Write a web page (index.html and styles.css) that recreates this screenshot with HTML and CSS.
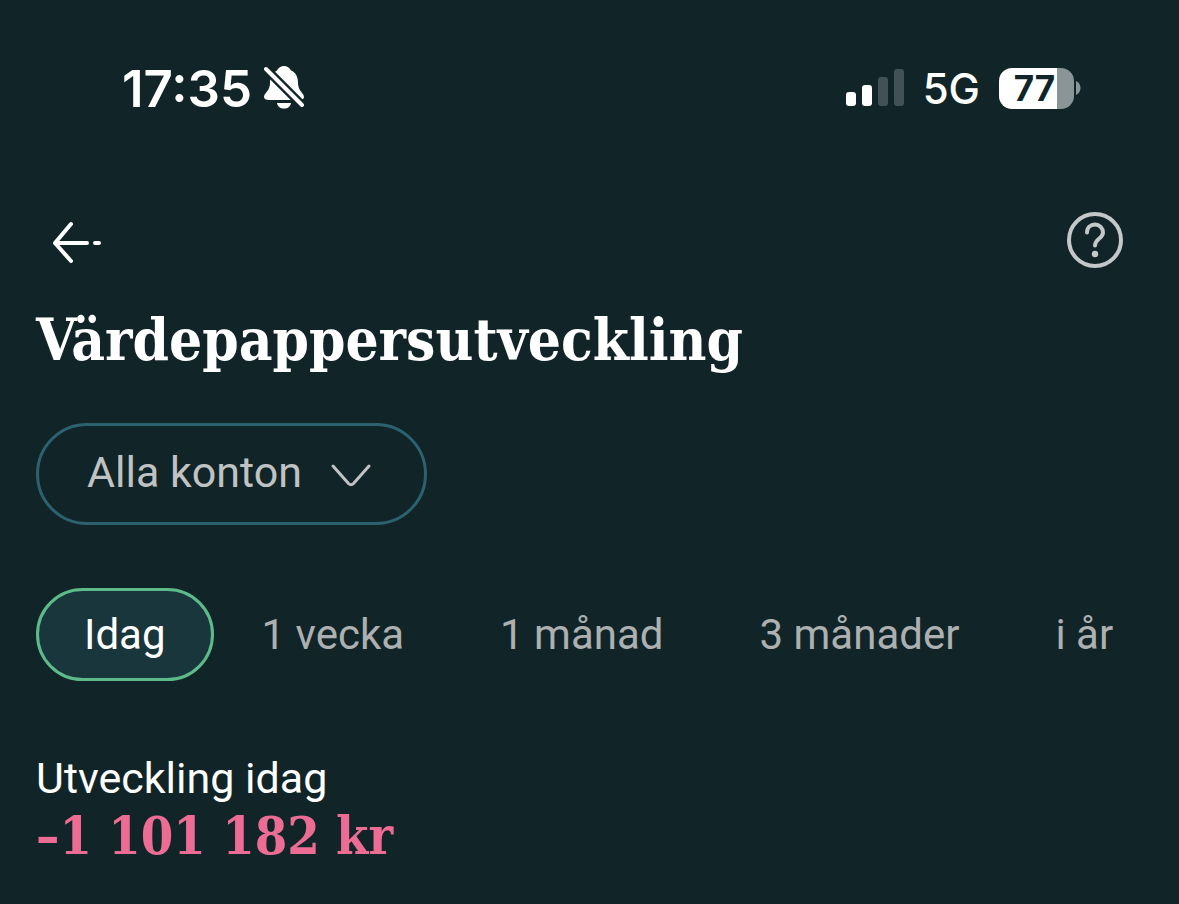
FILE: index.html
```html
<!DOCTYPE html>
<html lang="sv">
<head>
  <meta charset="UTF-8" />
  <meta name="viewport" content="width=device-width, initial-scale=1.0"/>
  <title>Värdepappersutveckling</title>
  <link rel="stylesheet" href="styles.css">
</head>
<body>
  <div class="status-bar">
    <div class="status-left">
      <span class="clock">17:35</span>
      <svg class="bell" width="42" height="44" viewBox="0 0 42 44" aria-hidden="true">
        <path d="M5 34 C2 34 0 33 0 31 C0 27 6 25 6 17 C6 9 10 6 13 4.500 C14.500 1.500 17 0 20 0 C23 0 25.500 1.500 27 4.500 C32 6.500 34 11 34 17 C34 25 40 27 40 31 C40 33 38 34 35 34 Z" fill="#fff"/>
        <path d="M13 37 H27 C26.500 40.500 24 42.500 20 42.500 C16 42.500 13.500 40.500 13 37 Z" fill="#fff"/>
        <path d="M1 2 L40 41" stroke="#112528" stroke-width="9"/>
        <path d="M2 3 L38 39" stroke="#fff" stroke-width="4" stroke-linecap="round"/>
      </svg>
    </div>
    <div class="status-right">
      <svg class="signal" width="58" height="38" viewBox="0 0 58 38" aria-hidden="true">
        <rect x="0" y="23" width="10" height="14" rx="3" fill="#fff"/>
        <rect x="16" y="16" width="10" height="21" rx="3" fill="#fff"/>
        <rect x="32" y="8" width="10" height="29" rx="3" fill="#415155"/>
        <rect x="48" y="0" width="10" height="37" rx="3" fill="#415155"/>
      </svg>
      <span class="network">5G</span>
      <div class="battery">
        <span class="battery-level">77</span>
        <svg width="5" height="14" viewBox="0 0 5 14" aria-hidden="true">
          <path d="M0 0 C6 3 6 11 0 14 Z" fill="#8a9597"/>
        </svg>
      </div>
    </div>
  </div>

  <header class="top-nav">
    <a href="#" class="back" aria-label="Tillbaka">
      <svg width="50" height="46" viewBox="0 0 50 46" fill="none" stroke="#fff" stroke-width="4" stroke-linecap="round" stroke-linejoin="round">
        <path d="M20 7 L4 26 L20 44 M4 26 H36 M44 26 H48"/>
      </svg>
    </a>
    <button type="button" class="help" aria-label="Hjälp">
      <svg width="56" height="56" viewBox="0 0 56 56" fill="none" stroke="#c4c8c8" stroke-width="4" stroke-linecap="round">
        <circle cx="28" cy="28" r="26"/>
        <path d="M20 20.500 C20 15.500 23.500 12.500 28 12.500 C32.500 12.500 36 16 36 20.500 C36 26.500 28 26.500 28 33.500"/>
        <circle cx="28" cy="42" r="3.200" fill="#c4c8c8" stroke="none"/>
      </svg>
    </button>
  </header>

  <main>
    <h1>Värdepappersutveckling</h1>

    <div class="account-picker">
      <select class="account-select" aria-label="Konto">
        <option>Alla konton</option>
      </select>
      <svg class="chevron" width="40" height="24" viewBox="0 0 40 24" fill="none" stroke="#c0c2c3" stroke-width="3" stroke-linecap="round" stroke-linejoin="round" aria-hidden="true">
        <path d="M2 2 L17.500 19.500 Q20 22 22.500 19.500 L38 2"/>
      </svg>
    </div>

    <div class="periods">
      <button type="button" class="period active" aria-pressed="true">Idag</button>
      <button type="button" class="period">1 vecka</button>
      <button type="button" class="period">1 månad</button>
      <button type="button" class="period">3 månader</button>
      <button type="button" class="period">i år</button>
    </div>

    <p class="result-label">Utveckling idag</p>
    <p class="result-value">–1 101 182 kr</p>
  </main>
</body>
</html>
```

FILE: styles.css
```css
* {
  box-sizing: border-box;
}

body {
  margin: 0;
  background: #112528;
  font-family: Roboto, sans-serif;
  color: white;
}

.status-bar {
  display: flex;
  justify-content: space-between;
  align-items: center;
  padding: 56px 98px 0 122px;
  height: 120px;
  font-family: Inter, sans-serif;
}

.status-left {
  display: flex;
  align-items: center;
  gap: 12px;
}

.clock {
  font-size: 51px;
  font-weight: 600;
}

.status-right {
  display: flex;
  align-items: center;
  gap: 19px;
}

.network {
  font-size: 42px;
  font-weight: 500;
}

.battery {
  display: flex;
  align-items: center;
  gap: 2px;
}

.battery-level {
  width: 75px;
  height: 41px;
  padding-right: 4px;
  border-radius: 13px;
  background: linear-gradient(to right, #fff 77%, #8a9597 77%);
  color: #112528;
  font-size: 35px;
  font-weight: 700;
  line-height: 41px;
  text-align: center;
}

.top-nav {
  display: flex;
  justify-content: space-between;
  align-items: center;
  padding: 92px 56px 0 51px;
}

.back,
.help {
  display: block;
}

.back svg,
.help svg {
  display: block;
}

.help {
  padding: 0;
  border: none;
  background: none;
  cursor: pointer;
}

main {
  padding: 32px 0 36px 36px;
}

h1 {
  margin: 0;
  font-family: "Roboto Slab", "DejaVu Serif Condensed", "DejaVu Serif", serif;
  font-size: 58px;
  font-weight: 700;
  line-height: 80px;
}

.account-picker {
  position: relative;
  width: fit-content;
  margin-top: 43px;
}

.account-select {
  display: block;
  appearance: none;
  width: 391px;
  height: 102px;
  padding: 0 90px 4px 48px;
  border: 3px solid #2c6270;
  border-radius: 51px;
  background: none;
  color: #c0c2c3;
  font-family: inherit;
  font-size: 43px;
  cursor: pointer;
}

/* sits on top of the select */
.chevron {
  position: absolute;
  top: 41px;
  right: 56px;
  pointer-events: none;
}

.periods {
  display: flex;
  margin-top: 63px;
  overflow-x: auto;
  scrollbar-width: none;
}

.period {
  flex: none;
  height: 93px;
  padding: 0 45px;
  border: 3px solid transparent;
  border-radius: 47px;
  background: none;
  color: #adb0b1;
  font-family: inherit;
  font-size: 42px;
  cursor: pointer;
}

.period.active {
  border-color: #5dbb8a;
  background: #1a363d;
  color: white;
}

.result-label {
  margin: 72px 0 0;
  font-size: 43px;
  line-height: 50px;
}

.result-value {
  margin: 0;
  color: #ec6c94;
  font-family: "Roboto Slab", "DejaVu Serif Condensed", "DejaVu Serif", serif;
  font-size: 52px;
  font-weight: 700;
  line-height: 66px;
}
```
